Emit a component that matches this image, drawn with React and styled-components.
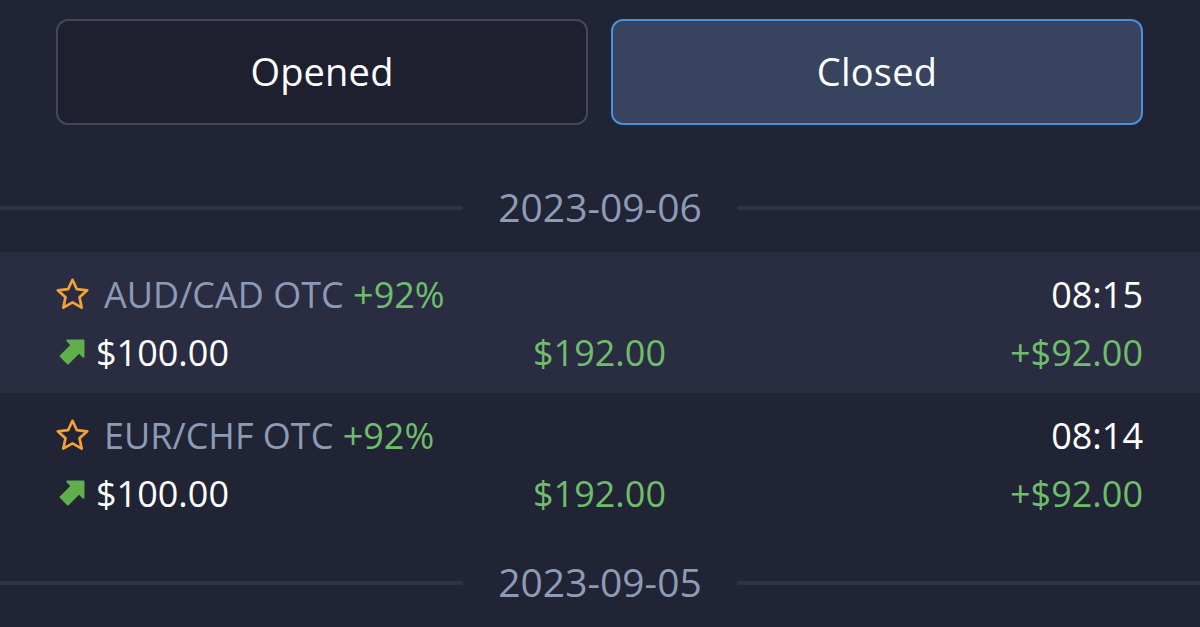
import React from "react";
import styled, { createGlobalStyle } from "styled-components";

const GlobalStyle = createGlobalStyle`
  html, body {
    margin: 0;
    padding: 0;
    background: #212434;
  }
  body {
    font-family: "Open Sans", "Noto Sans", sans-serif;
    color: #ffffff;
  }
`;

const Page = styled.div`
  width: 1200px;
  height: 627px;
  overflow: hidden;
  background: #212434;
`;

const Tabs = styled.div`
  display: grid;
  grid-template-columns: 1fr 1fr;
  gap: 23px;
  padding: 19px 57px 34px 56px;
`;

const Tab = styled.div`
  height: 106px;
  box-sizing: border-box;
  display: flex;
  align-items: center;
  justify-content: center;
  padding-bottom: 3px;
  border-radius: 12px;
  border: 2px solid ${({ active }) => (active ? "#4a91dc" : "#43485a")};
  background: ${({ active }) => (active ? "#37435f" : "#1e2030")};
  color: #ffffff;
  font-size: 38px;
  letter-spacing: 0.2px;
`;

const DateHeader = styled.div`
  display: flex;
  align-items: center;
  height: 60px;
  margin: 19px 0 14px;
`;

const Line = styled.div`
  flex: 1;
  height: 4px;
  background: #2e3246;
`;

const DateText = styled.div`
  padding: 0 35px 3px;
  font-size: 39px;
  color: #8e9bb6;
  line-height: 57px;
`;

const Row = styled.div`
  padding: 13px 57px 12px 56px;
  background: ${({ highlight }) => (highlight ? "#2a2d41" : "transparent")};
`;

const TopLine = styled.div`
  display: flex;
  align-items: center;
  justify-content: space-between;
  height: 58px;
  font-size: 36px;
`;

const BottomLine = styled.div`
  display: grid;
  grid-template-columns: 1fr auto 1fr;
  align-items: center;
  height: 58px;
  font-size: 36px;
`;

const Asset = styled.div`
  display: flex;
  align-items: center;
  gap: 15px;
`;

const Pair = styled.span`
  color: #8d9ab6;
`;

const Green = styled.span`
  color: #6fbd6b;
`;

const Time = styled.span`
  color: #ffffff;
`;

const Amount = styled.div`
  display: flex;
  align-items: center;
  gap: 11px;
  color: #ffffff;
  padding-left: 2px;
`;

const Payout = styled.div`
  color: #6fbd6b;
  text-align: center;
`;

const Profit = styled.div`
  color: #6fbd6b;
  text-align: right;
`;

const Star = () => (
  <svg width="33" height="32" viewBox="0 0 33 32">
    <path
      d="M16.5 1.8 L20.9 11.2 L31.2 12.3 L23.5 19.3 L25.7 29.6 L16.5 24.3 L7.3 29.6 L9.5 19.3 L1.8 12.3 L12.1 11.2 Z"
      fill="none"
      stroke="#f3a236"
      strokeWidth="2.7"
      strokeLinejoin="round"
    />
  </svg>
);

const ArrowUp = () => (
  <svg width="27" height="27" viewBox="0 0 26 26">
    <polygon
      points="9,1.5 24.5,1.5 24.5,17 20.3,12.8 9.5,23.5 2.5,16.5 13.2,5.7"
      fill="#5fb04c"
      stroke="#5fb04c"
      strokeWidth="2"
      strokeLinejoin="round"
    />
  </svg>
);

const trades = [
  { pair: "AUD/CAD OTC", time: "08:15" },
  { pair: "EUR/CHF OTC", time: "08:14" },
];

const DateDivider = ({ date }) => (
  <DateHeader>
    <Line />
    <DateText>{date}</DateText>
    <Line />
  </DateHeader>
);

const TradeRow = ({ pair, time, highlight }) => (
  <Row highlight={highlight}>
    <TopLine>
      <Asset>
        <Star />
        <span>
          <Pair>{pair}</Pair> <Green>+92%</Green>
        </span>
      </Asset>
      <Time>{time}</Time>
    </TopLine>
    <BottomLine>
      <Amount>
        <ArrowUp />
        $100.00
      </Amount>
      <Payout>$192.00</Payout>
      <Profit>+$92.00</Profit>
    </BottomLine>
  </Row>
);

export default function App() {
  return (
    <Page>
      <GlobalStyle />
      <Tabs>
        <Tab>Opened</Tab>
        <Tab active>Closed</Tab>
      </Tabs>
      <DateDivider date="2023-09-06" />
      {trades.map((t, i) => (
        <TradeRow key={t.time} {...t} highlight={i === 0} />
      ))}
      <DateDivider date="2023-09-05" />
    </Page>
  );
}
